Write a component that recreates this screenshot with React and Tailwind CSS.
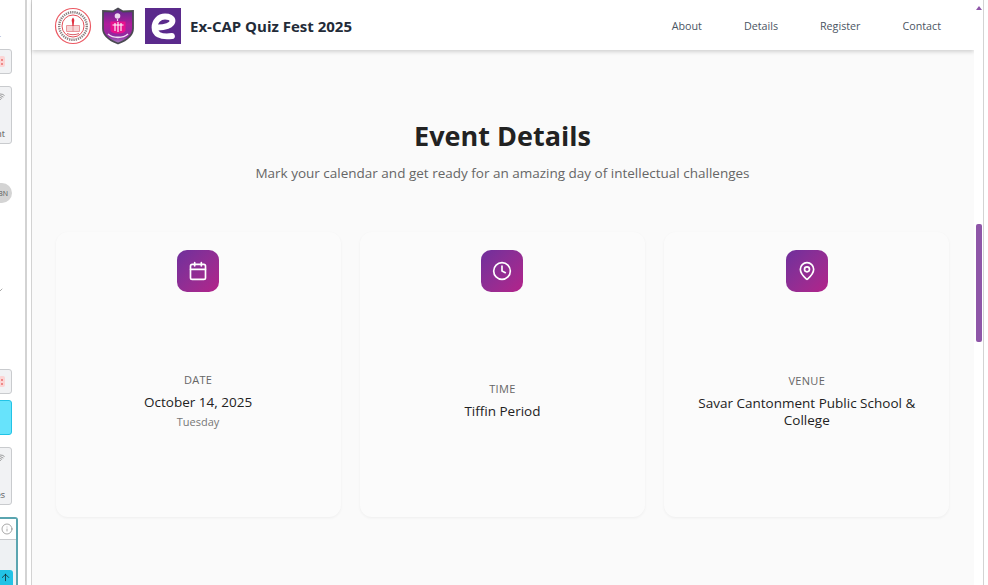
import { Calendar, Clock, MapPin, ArrowUp, Info, ChevronDown, Wifi } from 'lucide-react'

const DETAILS = [
  { icon: Calendar, label: 'DATE', value: 'October 14, 2025', note: 'Tuesday' },
  { icon: Clock, label: 'TIME', value: 'Tiffin Period' },
  { icon: MapPin, label: 'VENUE', value: 'Savar Cantonment Public School & College' },
]

function SchoolSeal() {
  return (
    <svg width="38" height="38" viewBox="0 0 38 38" fill="none">
      <circle cx="19" cy="19" r="17.500" fill="#fff" stroke="#ec5a64" strokeWidth="1.200" />
      <circle cx="19" cy="19" r="13.800" stroke="#8a7f80" strokeWidth="2.400" strokeDasharray="1.300 0.900" />
      <circle cx="19" cy="19" r="11" stroke="#e4505a" strokeWidth="1" />
      <path d="M12.500 18.500h13v6h-13z" fill="#f6d5d6" stroke="#e58088" strokeWidth="0.800" />
      <path d="M19 18.500v6" stroke="#e58088" strokeWidth="0.800" />
      <path d="M19 10.500c1.400 1.500 1.600 3 1 4.500l-.4 4h-1.200l-.4-4c-.6-1.500-.4-3 1-4.500z" fill="#e0303f" />
      <path d="M13 26.500c3.500 1.600 8.500 1.600 12 0" stroke="#d9606a" strokeWidth="1" />
    </svg>
  )
}

function SchoolShield() {
  return (
    <svg width="34" height="38" viewBox="0 0 34 38" fill="none">
      <defs>
        <linearGradient id="shield" x1="0" y1="0" x2="0" y2="1">
          <stop offset="0" stopColor="#5a2a8e" />
          <stop offset="0.450" stopColor="#b01d9c" />
          <stop offset="0.800" stopColor="#8d2ba0" />
          <stop offset="1" stopColor="#a98bc4" />
        </linearGradient>
      </defs>
      <path d="M17 1.500 22 4.500 32 4v17.500C32 29 25 33.500 17 36.500 9 33.500 2 29 2 21.500V4l10 .5z" fill="url(#shield)" stroke="#4a4a52" strokeWidth="1.800" />
      <circle cx="16.500" cy="9" r="2.800" fill="#eed8ee" />
      <path d="M16.500 12v2" stroke="#eed8ee" strokeWidth="1.200" />
      <path d="M9.500 14.500h15V23c0 2-3 3.500-7.500 3.500S9.500 25 9.500 23z" fill="#e8108e" />
      <path d="M11.500 18h11M14 16v8M20 16v8M17 15v10" stroke="#fff" strokeWidth="1.100" />
      <path d="M7 27c5 4.500 15 4.500 20 0" stroke="#f0e0f2" strokeWidth="1.600" />
    </svg>
  )
}

function FestLogo() {
  return (
    <div className="w-9 h-9 bg-[#5b2a8c] flex items-center justify-center shrink-0">
      <svg width="36" height="36" viewBox="0 0 36 36" fill="none">
        <path d="M13 19.500C19 19.500 27.500 17.500 27.500 13 27.500 10 24 8.500 20 8.500 14 8.500 9.500 13.500 9.500 19.500 9.500 26 15 29.500 27 28" stroke="#fff" strokeWidth="5.800" strokeLinecap="round" />
      </svg>
    </div>
  )
}

function AlertChip() {
  return (
    <span className="w-[6px] h-[11px] bg-[#fbd5d5] rounded-[2px] flex flex-col items-center justify-center gap-[2px]">
      <span className="w-[2px] h-[2px] bg-[#e88]" />
      <span className="w-[2px] h-[2px] bg-[#e88]" />
    </span>
  )
}

// what shows of the neighbouring panel on the far left
function SidePanel() {
  return (
    <div className="w-[25px] shrink-0 h-full overflow-hidden bg-white flex flex-col items-end text-[9px] leading-none text-[#555]">
      <span className="mt-[32px] mr-[24px] h-[3px] leading-none text-[6px]">.</span>
      <div className="mt-[14px] mr-[13px] w-[40px] h-[25px] shrink-0 bg-[#f1f2f4] border border-[#c9cbce] rounded-[3px] flex items-center justify-end pr-[6px]">
        <AlertChip />
      </div>
      <div className="mt-[12px] mr-[13px] w-[40px] h-[58px] shrink-0 bg-[#f1f2f4] border border-[#c9cbce] rounded-[3px] flex flex-col items-end justify-between py-[5px] pr-[6px]">
        <Wifi size={9} strokeWidth={1.500} />
        <span>nt</span>
      </div>
      <div className="mt-[39px] mr-[13px] w-[30px] h-[20px] shrink-0 rounded-full bg-[#d4d4d4] flex items-center justify-end pr-[4px] text-[7px]">BN</div>
      <ChevronDown size={8} strokeWidth={1.500} className="mt-[83px] mr-[21px] shrink-0" />
      <div className="mt-[75px] mr-[13px] w-[40px] h-[25px] shrink-0 bg-[#f1f2f4] border border-[#c9cbce] rounded-[3px] flex items-center justify-end pr-[6px]">
        <AlertChip />
      </div>
      <div className="mt-[6px] mr-[13px] w-[40px] h-[35px] shrink-0 bg-[#67e3fb] border border-[#22c3e6] rounded-[3px]" />
      <div className="mt-[12px] mr-[13px] w-[40px] h-[58px] shrink-0 bg-[#f1f2f4] border border-[#c9cbce] rounded-[3px] flex flex-col items-end justify-between py-[5px] pr-[6px]">
        <Wifi size={9} strokeWidth={1.500} />
        <span>es</span>
      </div>
      <div className="mt-[12px] mr-[7px] w-[45px] h-[80px] shrink-0 bg-[#eef1f3] border-2 border-[#5aa5b0] rounded-[3px] flex flex-col items-end">
        <div className="w-full h-[21px] bg-white border-b border-[#c9cbce] flex items-center justify-end pr-[3px]">
          <Info size={12} strokeWidth={1} />
        </div>
        <div className="mt-[30px] w-[22px] h-[20px] bg-[#22c3e6] rounded-[3px] flex items-start justify-end pr-[2px] pt-[2px] mr-[3px] text-[#111]">
          <ArrowUp size={11} strokeWidth={1.500} />
        </div>
      </div>
    </div>
  )
}

function Header() {
  return (
    <header className="h-[50px] shrink-0 bg-white shadow-[0_2px_4px_rgba(0,0,0,0.16)] flex items-center justify-between pt-[2px] pl-[22px] pr-[33px]">
      <div className="flex items-center">
        <SchoolSeal />
        <div className="ml-[9px]"><SchoolShield /></div>
        <div className="ml-[10px]"><FestLogo /></div>
        <span className="ml-[9px] text-[15px] font-bold text-[#232b38]">Ex-CAP Quiz Fest 2025</span>
      </div>
      <nav className="flex items-center gap-[42px] pt-[1px] text-[10.720px] text-[#4b5563]">
        <a>About</a>
        <a>Details</a>
        <a>Register</a>
        <a>Contact</a>
      </nav>
    </header>
  )
}

function DetailCard({ item }) {
  const Icon = item.icon
  return (
    <div className="h-[285px] bg-[#fbfbfb] rounded-[12px] shadow-[0_1px_3px_rgba(0,0,0,0.05)] pt-[18px] px-[24px] pb-[9px] flex flex-col items-center">
      <div className="w-[42px] h-[42px] shrink-0 rounded-[10px] bg-gradient-to-br from-[#6f2f9c] to-[#b3218a] flex items-center justify-center text-white">
        <Icon size={20} strokeWidth={2} />
      </div>
      <div className="flex-1 flex flex-col items-center justify-center text-center">
        <p className="text-[11px] leading-[17px] tracking-[0.300px] text-[#666]">{item.label}</p>
        <p className="mt-[6px] text-[13.500px] leading-[17px] text-[#222]">{item.value}</p>
        {item.note && <p className="mt-[4px] text-[11px] leading-[14px] text-[#777]">{item.note}</p>}
      </div>
    </div>
  )
}

export default function App() {
  return (
    <div className="h-[585px] w-[988px] overflow-hidden bg-white flex font-['Open_Sans','Noto_Sans',sans-serif]">
      <SidePanel />
      <div className="w-[2px] shrink-0 bg-[#d3d3d3]" />
      <div className="w-[4px] shrink-0 bg-white" />
      <div className="w-[1px] shrink-0 bg-[#d3d3d3]" />
      <main className="w-[942px] shrink-0 bg-[#fafafa] flex flex-col">
        <Header />
        <section className="pl-[23.600px] pr-[24.700px] pt-[66px]">
          <h1 className="text-center text-[27px] leading-[40px] font-bold text-[#222]">Event Details</h1>
          <p className="mt-[7px] text-center text-[13.500px] leading-[20px] text-[#666]">Mark your calendar and get ready for an amazing day of intellectual challenges</p>
          <div className="mt-[49px] grid grid-cols-3 gap-[19.350px]">
            {DETAILS.map(item => <DetailCard key={item.label} item={item} />)}
          </div>
        </section>
      </main>
      <div className="w-[9px] shrink-0 bg-white pl-[2px] flex flex-col">
        <div className="mt-[6px] w-0 h-0 border-x-[3.500px] border-x-transparent border-b-[4px] border-b-[#8e56a8]" />
        <div className="mt-[214px] w-[6px] h-[118px] rounded-[2px] bg-[#8e56a8]" />
      </div>
      <div className="w-[1px] shrink-0 bg-[#d3d3d3]" />
      <div className="flex-1 bg-white" />
    </div>
  )
}
